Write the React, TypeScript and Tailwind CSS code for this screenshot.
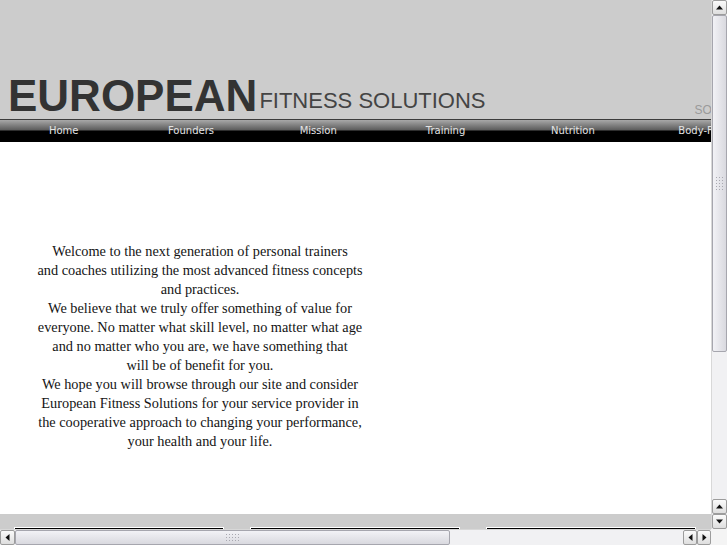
import React from 'react'

const navItems = ['Home', 'Founders', 'Mission', 'Training', 'Nutrition', 'Body-Fat']

const lines = [
  'Welcome to the next generation of personal trainers',
  'and coaches utilizing the most advanced fitness concepts',
  'and practices.',
  'We believe that we truly offer something of value for',
  'everyone. No matter what skill level, no matter what age',
  'and no matter who you are, we have something that',
  'will be of benefit for you.',
  'We hope you will browse through our site and consider',
  'European Fitness Solutions for your service provider in',
  'the cooperative approach to changing your performance,',
  'your health and your life.',
]

function Arrow({ dir }: { dir: 'up' | 'down' | 'left' | 'right' }) {
  const points = {
    up: '3.5,1.5 7,5.5 0,5.5',
    down: '0,1.5 7,1.5 3.5,5.5',
    left: '5.5,0 5.5,7 1.5,3.5',
    right: '1.5,0 1.5,7 5.5,3.5',
  }[dir]
  return (
    <div className="flex h-full w-full items-center justify-center rounded-[2px] border border-[#9c9c9c] bg-gradient-to-b from-[#fbfbfb] to-[#dedede]">
      <svg width="7" height="7" viewBox="0 0 7 7">
        <polygon points={points} fill="#111" />
      </svg>
    </div>
  )
}

function Grip({ cols, rows }: { cols: number; rows: number }) {
  return (
    <div
      className="grid gap-[2px]"
      style={{ gridTemplateColumns: `repeat(${cols}, 1px)` }}
    >
      {Array.from({ length: cols * rows }).map((_, i) => (
        <span key={i} className="h-px w-px bg-[#a8a8b0]" />
      ))}
    </div>
  )
}

function VScroll() {
  return (
    <div className="flex w-[16px] shrink-0 flex-col border-l border-[#d8d8d8] bg-[#f1f1f3]">
      <div className="h-[15px] shrink-0">
        <Arrow dir="up" />
      </div>
      <div className="flex h-[337px] shrink-0 items-center justify-center rounded-[2px] border border-[#a6a6ae] bg-gradient-to-r from-[#f2f2f6] to-[#d9d9df]">
        <Grip cols={3} rows={5} />
      </div>
      <div className="flex-1" />
      <div className="h-[15px] shrink-0">
        <Arrow dir="up" />
      </div>
      <div className="h-[15px] shrink-0">
        <Arrow dir="down" />
      </div>
    </div>
  )
}

function HScroll() {
  return (
    <div className="flex h-[16px] shrink-0">
      <div className="flex flex-1 border-t border-[#d8d8d8] bg-[#f1f1f3]">
        <div className="w-[15px] shrink-0">
          <Arrow dir="left" />
        </div>
        <div className="flex w-[435px] shrink-0 items-center justify-center rounded-[2px] border border-[#a6a6ae] bg-gradient-to-b from-[#f2f2f6] to-[#d9d9df]">
          <Grip cols={5} rows={3} />
        </div>
        <div className="flex-1" />
        <div className="w-[14px] shrink-0">
          <Arrow dir="left" />
        </div>
        <div className="w-[14px] shrink-0">
          <Arrow dir="right" />
        </div>
      </div>
      <div className="w-[16px] shrink-0 bg-[#f4f4f4]" />
    </div>
  )
}

export default function App() {
  return (
    <div className="flex h-[545px] w-[727px] flex-col overflow-hidden bg-white">
      <div className="flex min-h-0 flex-1">
        <div className="min-w-0 flex-1 overflow-hidden">
          <div className="w-[1000px]">
            <header className="flex h-[119px] items-end bg-[#cccccc] font-['Liberation_Sans',Arial,sans-serif]">
              <span className="mb-[1px] ml-[8px] text-[44px] font-bold leading-none text-[#333333]">
                EUROPEAN
              </span>
              <span className="mb-[7px] ml-[2px] text-[22px] leading-none text-[#444444]">
                FITNESS SOLUTIONS
              </span>
              <span className="mb-[3px] ml-[209px] text-[12px] leading-none text-[#9a9a9a]">
                SOLUTIONS
              </span>
            </header>
            <nav className="flex h-[23px] bg-[linear-gradient(to_bottom,#3c3c3c_0px,#3c3c3c_1px,#a8a8a8_1px,#5c5c5c_11px,#000_12px,#000_100%)] font-['DejaVu_Sans',Verdana,sans-serif] text-[10px] text-[#e4e4e4]">
              {navItems.map((item) => (
                <div key={item} className="flex w-[127.3px] items-center justify-center">
                  {item}
                </div>
              ))}
            </nav>
            <main className="h-[372px] w-[711px] pt-[100px]">
              <p className="w-[400px] text-center font-['Liberation_Serif','Times_New_Roman',serif] text-[14.3px] leading-[19px] text-[#141414]">
                {lines.map((line, i) => (
                  <React.Fragment key={i}>
                    {line}
                    <br />
                  </React.Fragment>
                ))}
              </p>
            </main>
            <footer className="h-[40px] bg-[#cccccc] pt-[13px]">
              <div className="ml-[14px] flex gap-[26px]">
                {[0, 1, 2].map((i) => (
                  <div key={i} className="h-[20px] w-[210px] border border-white bg-black" />
                ))}
              </div>
            </footer>
          </div>
        </div>
        <VScroll />
      </div>
      <HScroll />
    </div>
  )
}
